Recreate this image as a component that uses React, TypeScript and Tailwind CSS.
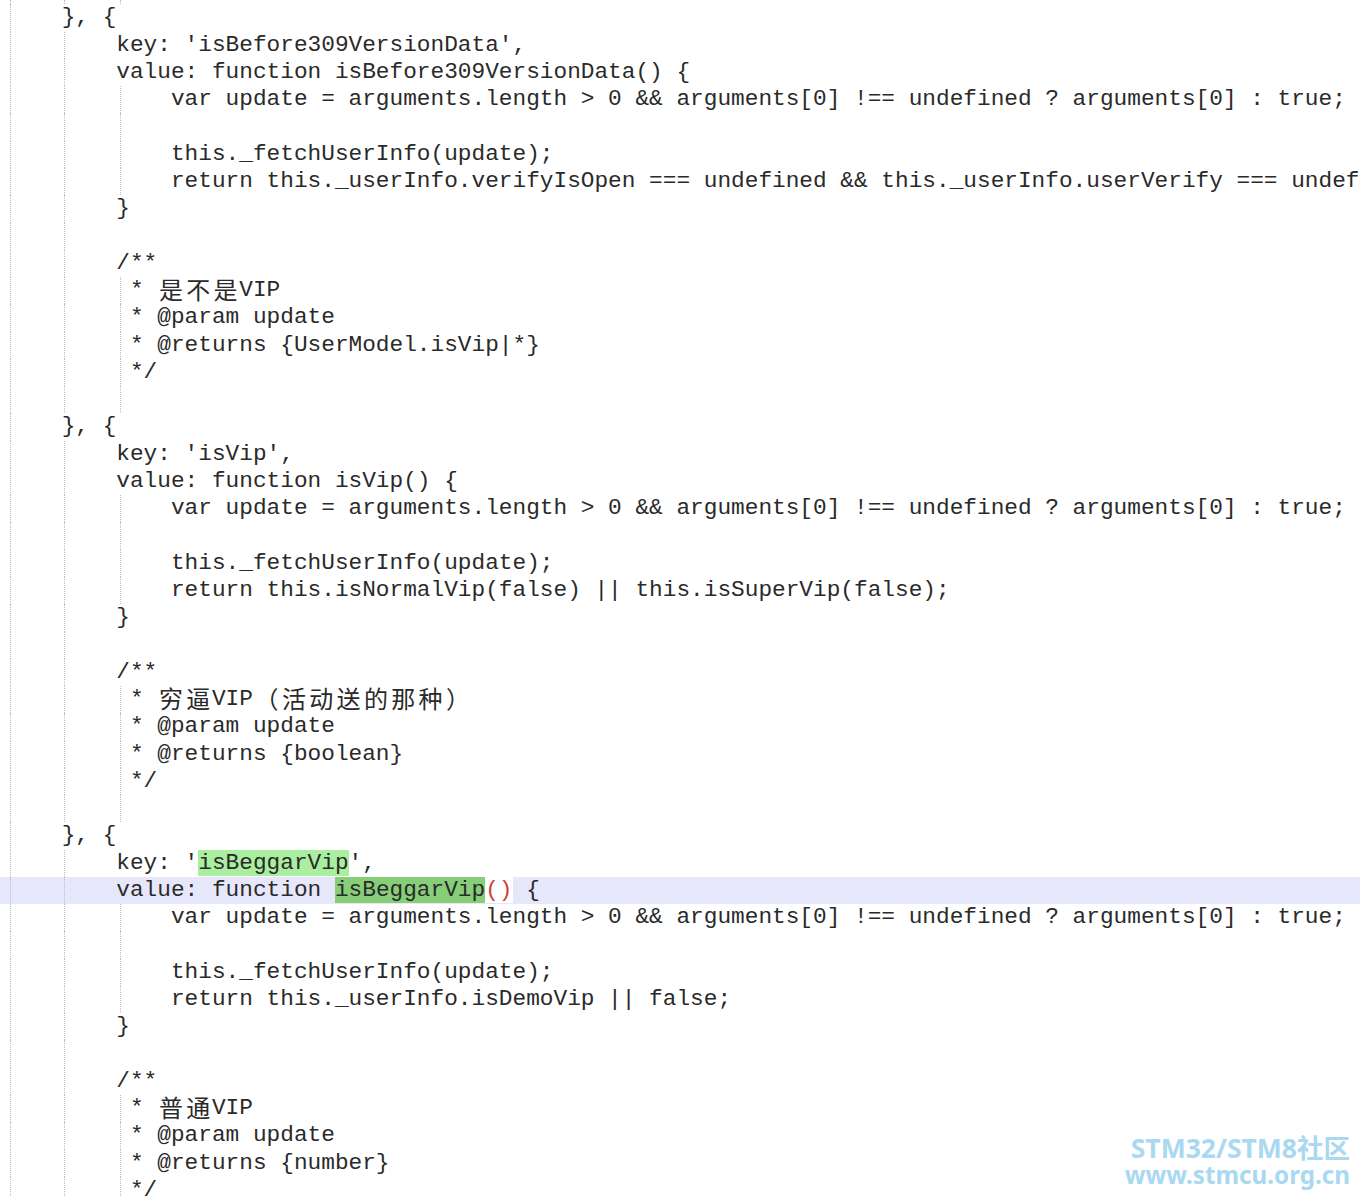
type Seg = { t: string; cls?: string };
type Line = { segs: Seg[]; guides: number[]; active?: boolean };

const GUIDE_X: Record<number, string> = {
  0: "left-[10px]",
  4: "left-[64px]",
  8: "left-[120px]",
};

const isWide = (ch: string) => ch.charCodeAt(0) >= 0x2e80;

// split text so CJK chars take two monospace cells, like the editor does
const renderText = (text: string) => {
  const out: React.ReactNode[] = [];
  let buf = "";
  Array.from(text).forEach((ch, i) => {
    if (isWide(ch)) {
      if (buf) out.push(buf);
      buf = "";
      out.push(
        <span
          key={i}
          className="relative -top-[2px] inline-block w-[27.34px] text-center text-[24px] leading-[27.27px] font-['Noto_Sans_CJK_SC',sans-serif] align-top"
        >
          {ch}
        </span>
      );
    } else {
      buf += ch;
    }
  });
  if (buf) out.push(buf);
  return out;
};

const p = (t: string): Seg[] => [{ t }];

const bodyGuides = [0, 4, 8];
const outerGuides = [0, 4];

const block = (key: string, returnLine: string, comment: string[], highlight = false): Line[] => {
  const lines: Line[] = [
    { segs: p("    }, {"), guides: [0] },
    highlight
      ? {
          segs: [
            { t: "        key: '" },
            { t: key, cls: "bg-[#a9ef9f]" },
            { t: "'," },
          ],
          guides: outerGuides,
        }
      : { segs: p(`        key: '${key}',`), guides: outerGuides },
    highlight
      ? {
          segs: [
            { t: "        value: function " },
            { t: key, cls: "bg-[#86cf78]" },
            { t: "()", cls: "bg-white text-[#d23b3b]" },
            { t: " {" },
          ],
          guides: outerGuides,
          active: true,
        }
      : { segs: p(`        value: function ${key}() {`), guides: outerGuides },
    {
      segs: p(
        "            var update = arguments.length > 0 && arguments[0] !== undefined ? arguments[0] : true;"
      ),
      guides: bodyGuides,
    },
    { segs: p(""), guides: bodyGuides },
    { segs: p("            this._fetchUserInfo(update);"), guides: bodyGuides },
    { segs: p(`            ${returnLine}`), guides: bodyGuides },
    { segs: p("        }"), guides: outerGuides },
    { segs: p(""), guides: outerGuides },
    { segs: p("        /**"), guides: outerGuides },
  ];
  comment.forEach((c) => lines.push({ segs: p(`         * ${c}`), guides: bodyGuides }));
  lines.push({ segs: p("         */"), guides: bodyGuides });
  lines.push({ segs: p(""), guides: bodyGuides });
  return lines;
};

const lines: Line[] = [
  ...block(
    "isBefore309VersionData",
    "return this._userInfo.verifyIsOpen === undefined && this._userInfo.userVerify === undefined;",
    ["是不是VIP", "@param update", "@returns {UserModel.isVip|*}"]
  ),
  ...block(
    "isVip",
    "return this.isNormalVip(false) || this.isSuperVip(false);",
    ["穷逼VIP（活动送的那种）", "@param update", "@returns {boolean}"]
  ),
  ...block(
    "isBeggarVip",
    "return this._userInfo.isDemoVip || false;",
    ["普通VIP", "@param update", "@returns {number}"],
    true
  ),
];

const Guides = ({ cols }: { cols: number[] }) => (
  <>
    {cols.map((c) => (
      <span
        key={c}
        className={`absolute top-0 bottom-0 border-l border-dotted border-[#bcbcbc] ${GUIDE_X[c]}`}
      />
    ))}
  </>
);

const App = () => {
  return (
    <div className="relative w-[1360px] h-[1196px] overflow-hidden bg-white text-[#2a2a2a] font-['Liberation_Mono',monospace] text-[22.78px]">
      <div className="flex flex-col">
        <div className="relative h-[4.4px]">
          <Guides cols={[0, 4, 8]} />
        </div>
        {lines.map((line, idx) => (
          <div
            key={idx}
            className={`relative h-[27.27px] leading-[27.27px] pl-[7px] whitespace-pre ${
              line.active ? "bg-[#e7e7fb]" : ""
            }`}
          >
            <Guides cols={line.guides} />
            <span className="relative">
              {line.segs.map((s, i) => (
                <span key={i} className={s.cls}>
                  {renderText(s.t)}
                </span>
              ))}
            </span>
          </div>
        ))}
      </div>

      <div className="absolute right-[10px] bottom-[8px] flex flex-col items-end text-[#a9d8f1] font-bold font-['Noto_Sans','Noto_Sans_CJK_SC',sans-serif]">
        <span className="text-[26.5px] leading-[27px]">STM32/STM8社区</span>
        <span className="text-[24.2px] leading-[26px]">www.stmcu.org.cn</span>
      </div>
    </div>
  );
};

export default App;
